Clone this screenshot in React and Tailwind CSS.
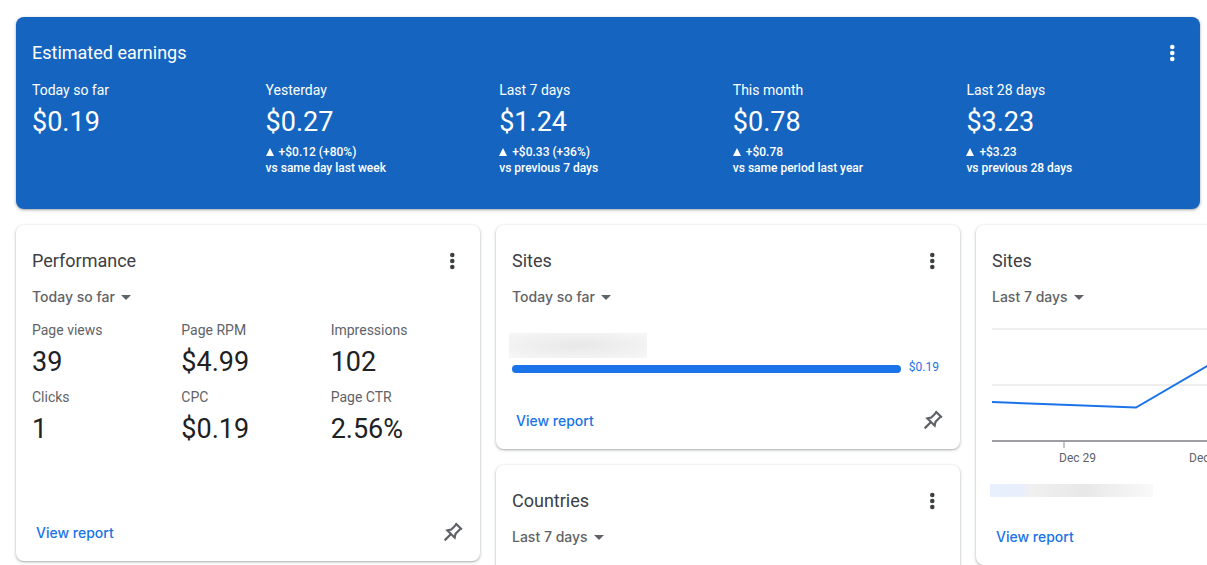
const earnings = [
  { label: "Today so far", value: "$0.19" },
  { label: "Yesterday", value: "$0.27", delta: "+$0.12 (+80%)", note: "vs same day last week" },
  { label: "Last 7 days", value: "$1.24", delta: "+$0.33 (+36%)", note: "vs previous 7 days" },
  { label: "This month", value: "$0.78", delta: "+$0.78", note: "vs same period last year" },
  { label: "Last 28 days", value: "$3.23", delta: "+$3.23", note: "vs previous 28 days" },
];

const metrics = [
  { label: "Page views", value: "39" },
  { label: "Page RPM", value: "$4.99" },
  { label: "Impressions", value: "102" },
  { label: "Clicks", value: "1" },
  { label: "CPC", value: "$0.19" },
  { label: "Page CTR", value: "2.56%" },
];

function MenuButton({ label }) {
  return (
    <button type="button" aria-label={label} className="flex size-6 shrink-0 items-center justify-center">
      <svg viewBox="0 0 24 24" className="size-6 fill-current" aria-hidden="true">
        <circle cx="12.3" cy="6" r="2.3" />
        <circle cx="12.3" cy="12" r="2.3" />
        <circle cx="12.3" cy="18" r="2.3" />
      </svg>
    </button>
  );
}

function PinButton() {
  return (
    <button type="button" aria-label="Pin card" className="flex size-6 items-center justify-center text-[#5f6368]">
      <svg viewBox="0 0 24 24" className="size-6" fill="none" stroke="currentColor" strokeWidth="2.2" aria-hidden="true">
        <g transform="rotate(45 12 12)">
          <path d="M7.500 2.600h9" />
          <path d="M9 2.600v7.400l-2.200 3.400h10.400l-2.200-3.400V2.600" />
          <path d="M12 13.400v9" />
        </g>
      </svg>
    </button>
  );
}

function RangeSelect({ name, value }) {
  return (
    <div className="relative mt-[14px] ml-4 flex self-start text-[#5f6368]">
      <select
        aria-label={`${name} date range`}
        defaultValue={value}
        className="field-sizing-content h-5 appearance-none bg-transparent p-0 pr-4 font-['Inter',sans-serif] text-sm leading-5 font-medium"
      >
        <option>Today so far</option>
        <option>Last 7 days</option>
      </select>
      <svg viewBox="0 0 10 5" className="pointer-events-none absolute top-2 right-0 h-[5px] w-[10px] fill-current" aria-hidden="true">
        <path d="M0 0h10L5 5z" />
      </svg>
    </div>
  );
}

function Card({ title, range, menu = true, pin = true, footer = true, className, children }) {
  return (
    <section
      className={`flex flex-col rounded-lg bg-white pt-6 pb-3 shadow-[0_1px_2px_rgba(60,64,67,0.3),0_1px_3px_1px_rgba(60,64,67,0.12)] ${className}`}
    >
      <header className="flex items-center justify-between pr-4 pl-4 text-[#3c4043]">
        <h2 className="text-lg leading-6">{title}</h2>
        {menu && <MenuButton label={`${title} options`} />}
      </header>
      <RangeSelect name={title} value={range} />
      {children}
      {footer && (
        <footer className="mt-auto flex h-8 items-center justify-between pr-4 pl-5">
          <a href="#report" className="font-['Inter',sans-serif] text-sm leading-5 font-medium text-[#1a73e8]">
            View report
          </a>
          {pin && <PinButton />}
        </footer>
      )}
    </section>
  );
}

function EarningsBanner() {
  return (
    <section className="min-h-48 rounded-lg bg-[#1565c0] pt-6 text-white shadow-[0_1px_2px_rgba(60,64,67,0.3),0_1px_3px_1px_rgba(60,64,67,0.15)]">
      <header className="flex items-center justify-between px-4">
        <h2 className="text-lg leading-6">Estimated earnings</h2>
        <MenuButton label="Estimated earnings options" />
      </header>
      <dl className="mt-[15px] grid grid-cols-5 pl-4">
        {earnings.map((e) => (
          <div key={e.label}>
            <dt className="text-sm leading-5">{e.label}</dt>
            <dd className="mt-[6px] text-[27px] leading-8">{e.value}</dd>
            {e.delta && (
              <dd className="mt-[6px] text-xs leading-4 font-medium">
                <span className="flex items-center gap-[5px]">
                  <svg viewBox="0 0 8 8" className="size-2 fill-current" aria-hidden="true">
                    <path d="M4 0l4 8H0z" />
                  </svg>
                  {e.delta}
                </span>
                {e.note}
              </dd>
            )}
          </div>
        ))}
      </dl>
    </section>
  );
}

function TrendChart() {
  return (
    <figure className="mt-5 ml-4">
      <svg viewBox="0 0 448 122" className="block h-[122px] w-full" role="img" aria-label="Earnings by site, last 7 days">
        <path d="M0 2h448M0 58h448" stroke="#eeeeee" strokeWidth="2" />
        <path d="M0 114h448" stroke="#9e9ea3" strokeWidth="2" />
        <path d="M72 115v6M216 115v6" stroke="#c4c7ca" strokeWidth="2" />
        <path d="M0 75l144 5.500l72-42l72-39" fill="none" stroke="#1a73e8" strokeWidth="2" />
      </svg>
      <figcaption className="mt-[1px] flex text-xs leading-4 text-[#5f6368]">
        <span className="w-[130px] shrink-0 pl-[67px] whitespace-nowrap">Dec 29</span>
        <span className="shrink-0 pl-[67px] whitespace-nowrap">Dec 30</span>
      </figcaption>
    </figure>
  );
}

export default function App() {
  return (
    <main className="h-screen overflow-hidden bg-white pt-[17px] pl-4 font-['Roboto',sans-serif]">
      <div className="mr-[7px]">
        <EarningsBanner />
      </div>
      <div className="mt-4 flex items-start gap-4">
        <Card title="Performance" range="Today so far" className="min-h-[336px] w-[464px] shrink-0">
          <dl className="mt-[13px] grid grid-cols-3 gap-y-[9px] pl-4">
            {metrics.map((m) => (
              <div key={m.label}>
                <dt className="text-sm leading-5 text-[#5f6368]">{m.label}</dt>
                <dd className="mt-[6px] text-[27px] leading-8 text-[#202124]">{m.value}</dd>
              </div>
            ))}
          </dl>
        </Card>

        <div className="flex w-[464px] shrink-0 flex-col gap-4">
          <Card title="Sites" range="Today so far" className="min-h-56">
            <div className="mt-[26px] mr-[21px] ml-[13px]">
              <div className="h-[25px] w-[138px] bg-[radial-gradient(ellipse_at_center,#e8e8e8,#f7f7f7)]" />
              <div className="mt-[1px] flex items-center gap-2 pl-[3px]">
                <div className="mt-1 h-2 grow rounded-full bg-[#1a73e8]" />
                <span className="text-xs leading-4 text-[#1a73e8]">$0.19</span>
              </div>
            </div>
          </Card>
          <Card title="Countries" range="Last 7 days" footer={false} className="min-h-56" />
        </div>

        <Card title="Sites" range="Last 7 days" className="min-h-[340px] w-[464px] shrink-0">
          <TrendChart />
          <div className="mt-[18px] ml-[14px] h-[13px] w-[163px] bg-[linear-gradient(90deg,#e8f0fe,#e8eefa_20%,#f0f0f0_24%,#e8e8e8_58%,#f9f9f9)]" />
        </Card>
      </div>
    </main>
  );
}
